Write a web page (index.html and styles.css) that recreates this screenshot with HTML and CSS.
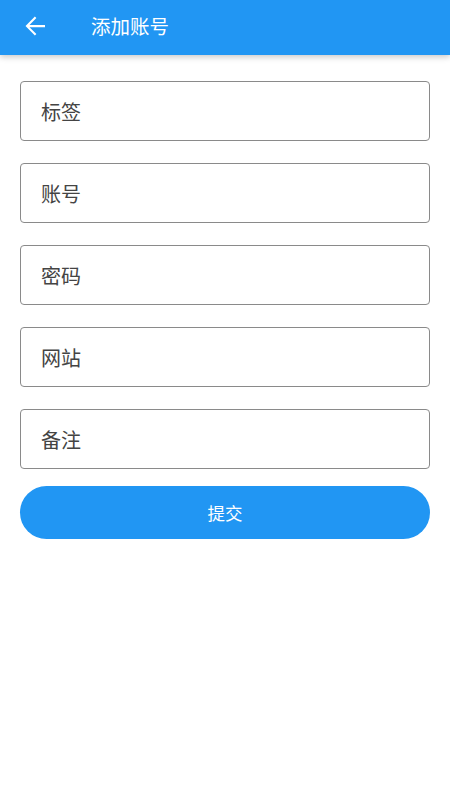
FILE: index.html
```html
<!DOCTYPE html>
<html lang="zh">
<head>
<meta charset="utf-8">
<link rel="stylesheet" href="styles.css">
</head>
<body>
<header class="appbar">
  <svg class="back" width="30" height="30" viewBox="0 0 24 24"><path d="M20 11.1H7.6l5.5-5.5L11.9 4.4 4.4 12l7.5 7.6 1.2-1.2-5.5-5.5H20v-1.8z" fill="#fff"/></svg>
  <span class="title">添加账号</span>
</header>
<main class="form">
  <div class="field">标签</div>
  <div class="field">账号</div>
  <div class="field">密码</div>
  <div class="field">网站</div>
  <div class="field">备注</div>
  <button class="submit">提交</button>
</main>
</body>
</html>
```
FILE: styles.css
```css
html, body { margin: 0; padding: 0; background: #fff; }
body { font-family: Roboto, "Noto Sans CJK SC", sans-serif; width: 450px; height: 800px; }
.appbar {
  height: 55px;
  box-sizing: border-box;
  padding-bottom: 4px;
  background: #2196F3;
  display: flex;
  align-items: center;
  box-shadow: 0 2px 6px rgba(0,0,0,0.22);
  position: relative;
}
.back { margin-left: 20px; width: 30px; height: 30px; }
.title { margin-left: 41px; color: #fff; font-size: 19.5px; }
.form {
  padding: 26px 20px 0;
  display: flex;
  flex-direction: column;
  gap: 22px;
}
.field {
  height: 58px;
  border: 1px solid #8a8a8a;
  border-radius: 4px;
  display: flex;
  align-items: center;
  padding-left: 20px;
  font-size: 20px;
  color: #444;
}
.submit {
  margin-top: -5px;
  height: 53px;
  border: none;
  border-radius: 27px;
  background: #2196F3;
  color: #fff;
  font-size: 17.5px;
  font-family: Roboto, "Noto Sans CJK SC", sans-serif;
}
```
